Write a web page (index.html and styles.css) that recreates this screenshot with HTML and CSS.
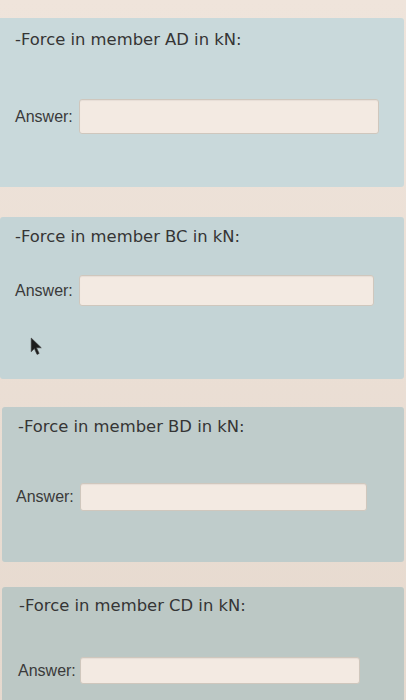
FILE: index.html
```html
<!DOCTYPE html>
<html lang="en">
<head>
    <meta charset="UTF-8">
    <meta name="viewport" content="width=device-width, initial-scale=1.0">
    <title>Truss Member Forces</title>
    <link rel="stylesheet" href="styles.css">
</head>
<body>

    <!-- Questions -->
    <main class="quiz">
        <section class="question">
            <p class="prompt">-Force in member AD in kN:</p>
            <label class="answer">
                <span>Answer:</span>
                <input type="text">
            </label>
        </section>

        <section class="question">
            <p class="prompt">-Force in member BC in kN:</p>
            <label class="answer">
                <span>Answer:</span>
                <input type="text">
            </label>
        </section>

        <section class="question">
            <p class="prompt">-Force in member BD in kN:</p>
            <label class="answer">
                <span>Answer:</span>
                <input type="text">
            </label>
        </section>

        <section class="question">
            <p class="prompt">-Force in member CD in kN:</p>
            <label class="answer">
                <span>Answer:</span>
                <input type="text">
            </label>
        </section>
    </main>

    <!-- Mouse pointer -->
    <svg class="pointer" width="13" height="19" viewBox="0 0 12 18">
        <path d="M1 1 L1 14 L4 11 L6.5 16.5 L8.5 15.6 L6 10.2 L10.5 10.2 Z" fill="#1c1c1c" stroke="#3a3a3a" stroke-width="0.6"/>
    </svg>

</body>
</html>
```

FILE: styles.css
```css
body {
    margin: 0;
    padding-top: 18px;
    background: linear-gradient(#efe4db, #e6d9ce);
    font-family: "DejaVu Sans", Verdana, sans-serif;
    color: #333;
    height: 700px;
    overflow: hidden;
}

.quiz {
    display: flex;
    flex-direction: column;
    margin-right: 2px;
}

/* Question panels */
.question {
    background-color: #c9d9db;
    border-radius: 3px;
    padding: 12px 0 53px 15px;
    margin-bottom: 30px;
}

.question:first-child {
    border-top-left-radius: 0;
    border-bottom-left-radius: 0;
}

.prompt {
    margin: 0;
    font-size: 16.4px;
    line-height: 20px;
    color: #353535;
}

.answer {
    display: flex;
    align-items: center;
    margin-top: 49px;
}

.answer span {
    font-family: "Liberation Sans", Arial, sans-serif;
    font-size: 16px;
    color: #3a3a3a;
    width: 64px;
}

.answer input {
    box-sizing: border-box;
    width: 300px;
    height: 35px;
    border: 1px solid #cfc7bd;
    border-radius: 3px;
    background-color: #f3eae2;
    box-shadow: inset 0 1px 1px rgba(0, 0, 0, 0.05);
}

.question:nth-child(2) {
    background-color: #c4d4d6;
    padding: 10px 0 73px 15px;
    margin-bottom: 28px;
}
.question:nth-child(2) .answer { margin-top: 28px; }
.question:nth-child(2) .answer input { width: 295px; height: 31px; }

.question:nth-child(3) {
    background-color: #bfcccb;
    margin-left: 2px;
    padding: 10px 0 51px 14px;
    margin-bottom: 25px;
}
.question:nth-child(3) .prompt { margin-left: 2px; }
.question:nth-child(3) .answer { margin-top: 46px; }
.question:nth-child(3) .answer input { width: 287px; height: 28px; }

.question:nth-child(4) {
    background-color: #bcc8c5;
    margin-left: 2px;
    padding: 9px 0 30px 14px;
}
.question:nth-child(4) .prompt { margin-left: 3px; }
.question:nth-child(4) .answer { margin-top: 41px; }
.question:nth-child(4) .answer span { margin-left: 2px; width: 62px; }
.question:nth-child(4) .answer input { width: 280px; height: 27px; }

.pointer {
    position: absolute;
    left: 30px;
    top: 337px;
}
```
